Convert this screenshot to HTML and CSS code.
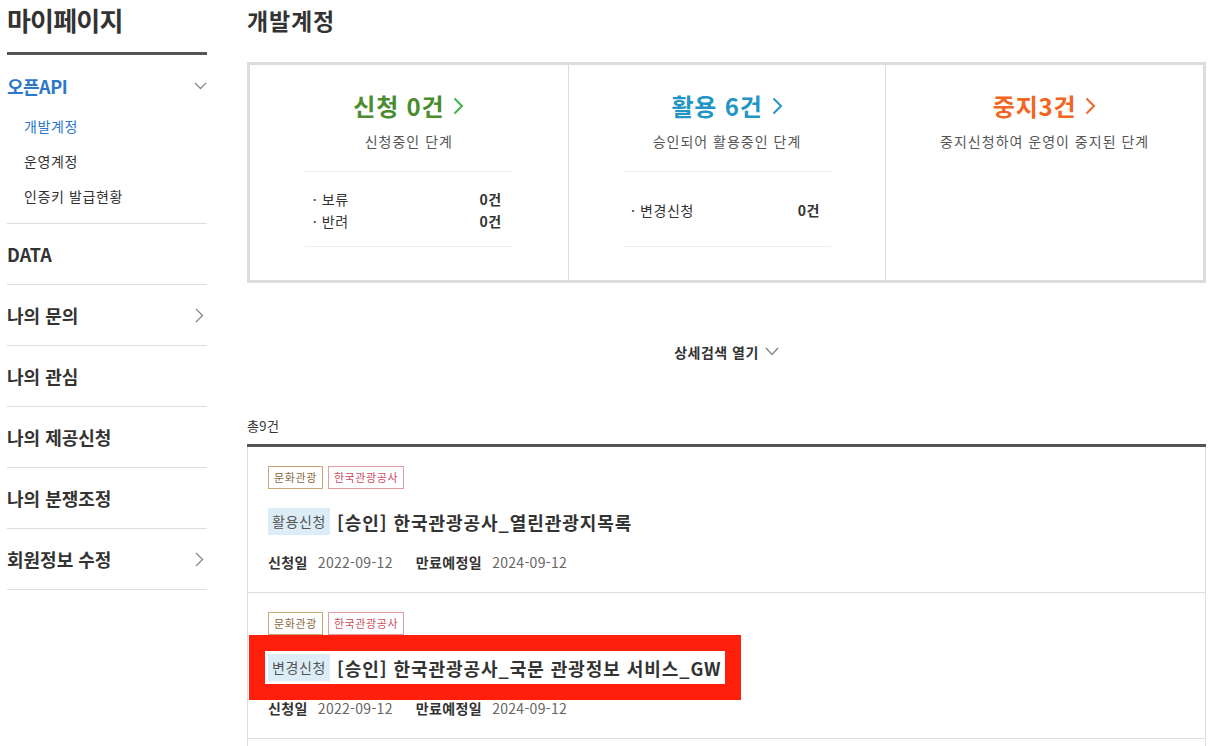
FILE: index.html
```html
<!DOCTYPE html>
<html lang="ko">
<head>
<meta charset="utf-8">
<title>마이페이지 - 개발계정</title>
<link rel="stylesheet" href="styles.css">
</head>
<body>
<div class="page">
  <aside class="side">
    <h1 class="side-title">마이페이지</h1>
    <div class="menu-group">
      <div class="menu-head active">
        <span>오픈API</span>
        <svg class="chev-down" width="13" height="8" viewBox="0 0 13 8"><polyline points="1,1 6.5,6.5 12,1" fill="none" stroke="#8a8a8a" stroke-width="1.4"/></svg>
      </div>
      <ul class="sub">
        <li class="on">개발계정</li>
        <li>운영계정</li>
        <li>인증키 발급현황</li>
      </ul>
    </div>
    <div class="menu-row"><span>DATA</span></div>
    <div class="menu-row"><span>나의 문의</span><svg class="chev-right" width="9" height="15" viewBox="0 0 9 15"><polyline points="1,1 7.5,7.5 1,14" fill="none" stroke="#8a8a8a" stroke-width="1.4"/></svg></div>
    <div class="menu-row"><span>나의 관심</span></div>
    <div class="menu-row"><span>나의 제공신청</span></div>
    <div class="menu-row"><span>나의 분쟁조정</span></div>
    <div class="menu-row"><span>회원정보 수정</span><svg class="chev-right" width="9" height="15" viewBox="0 0 9 15"><polyline points="1,1 7.5,7.5 1,14" fill="none" stroke="#8a8a8a" stroke-width="1.4"/></svg></div>
  </aside>

  <main class="main">
    <h2 class="main-title">개발계정</h2>

    <section class="summary">
      <div class="sum-col">
        <div class="sum-title green">신청 0건<svg class="sum-chev" width="11" height="18" viewBox="0 0 11 18"><polyline points="1.5,1.5 9,9 1.5,16.5" fill="none" stroke="#3db549" stroke-width="2"/></svg></div>
        <p class="sum-desc">신청중인 단계</p>
        <ul class="sum-list">
          <li><span>· 보류</span><b>0건</b></li>
          <li><span>· 반려</span><b>0건</b></li>
        </ul>
      </div>
      <div class="sum-col">
        <div class="sum-title blue">활용 6건<svg class="sum-chev" width="11" height="18" viewBox="0 0 11 18"><polyline points="1.5,1.5 9,9 1.5,16.5" fill="none" stroke="#2196c4" stroke-width="2"/></svg></div>
        <p class="sum-desc">승인되어 활용중인 단계</p>
        <ul class="sum-list">
          <li><span>· 변경신청</span><b>0건</b></li>
        </ul>
      </div>
      <div class="sum-col">
        <div class="sum-title orange">중지3건<svg class="sum-chev" width="11" height="18" viewBox="0 0 11 18"><polyline points="1.5,1.5 9,9 1.5,16.5" fill="none" stroke="#f26522" stroke-width="2"/></svg></div>
        <p class="sum-desc">중지신청하여 운영이 중지된 단계</p>
      </div>
    </section>

    <div class="search-toggle">
      <span>상세검색 열기</span>
      <svg width="14" height="9" viewBox="0 0 14 9"><polyline points="1,1 7,7.5 13,1" fill="none" stroke="#888" stroke-width="1.3"/></svg>
    </div>

    <p class="total">총9건</p>

    <ul class="list">
      <li class="item">
        <div class="tags"><span class="tag tag-cat">문화관광</span><span class="tag tag-org">한국관광공사</span></div>
        <div class="item-title"><span class="badge">활용신청</span><strong>[승인] 한국관광공사_열린관광지목록</strong></div>
        <div class="dates"><b>신청일</b><span>2022-09-12</span><b class="gap">만료예정일</b><span>2024-09-12</span></div>
      </li>
      <li class="item">
        <div class="tags"><span class="tag tag-cat">문화관광</span><span class="tag tag-org">한국관광공사</span></div>
        <div class="item-title highlight"><span class="badge">변경신청</span><strong>[승인] 한국관광공사_국문 관광정보 서비스_GW</strong></div>
        <div class="dates"><b>신청일</b><span>2022-09-12</span><b class="gap">만료예정일</b><span>2024-09-12</span></div>
      </li>
      <li class="item item-empty"></li>
    </ul>
  </main>
</div>
</body>
</html>
```

FILE: styles.css
```css
* { box-sizing: border-box; }
html, body { margin: 0; padding: 0; background: #fff; }
body {
  font-family: "Noto Sans CJK KR", "Noto Sans", sans-serif;
  color: #333;
  overflow: hidden;
  height: 746px;
}
ul { list-style: none; margin: 0; padding: 0; }
p { margin: 0; }

.page {
  display: flex;
  gap: 40px;
  padding-left: 7px;
  width: 1206px;
}

/* ---------- sidebar ---------- */
.side { width: 200px; flex: none; }
.side-title {
  margin: 0;
  padding-top: 2px;
  height: 55px;
  font-size: 26px;
  line-height: 36px;
  font-weight: 700;
  color: #333;
  letter-spacing: -0.8px;
  border-bottom: 3px solid #555;
}
.menu-group { border-bottom: 1px solid #ddd; }
.menu-head {
  display: flex;
  justify-content: space-between;
  align-items: center;
  margin-top: 19px;
  height: 24px;
  font-size: 18px;
  font-weight: 700;
  letter-spacing: -0.5px;
}
.menu-head.active { color: #2b78c9; }
.sub { padding: 11px 0 9px 17px; }
.sub li {
  height: 35px;
  line-height: 35px;
  font-size: 14px;
  color: #333;
  letter-spacing: 0.6px;
}
.sub li.on { color: #2b78c9; }
.menu-row {
  display: flex;
  justify-content: space-between;
  align-items: center;
  height: 61px;
  border-bottom: 1px solid #ddd;
  font-size: 18px;
  font-weight: 700;
  letter-spacing: 0;
  color: #333;
}
.chev-right { margin-right: 3px; }

/* ---------- main ---------- */
.main { width: 959px; flex: none; }
.main-title {
  margin: 0;
  padding-top: 3px;
  height: 62px;
  font-size: 23px;
  line-height: 34px;
  font-weight: 700;
  color: #333;
  letter-spacing: 0.8px;
}

.summary {
  display: grid;
  grid-template-columns: 1fr 1fr 1fr;
  height: 221px;
  border: 3px solid #ddd;
}
.sum-col {
  display: flex;
  flex-direction: column;
  align-items: center;
  padding-top: 24px;
  border-left: 1px solid #ddd;
}
.sum-col:first-child { border-left: 0; }
.sum-title {
  display: flex;
  align-items: center;
  gap: 9px;
  height: 32px;
  font-size: 24px;
  font-weight: 700;
  letter-spacing: 0.8px;
}
.sum-chev { margin-top: 1px; }
.green { color: #4b8c2f; }
.blue { color: #2196c4; }
.orange { color: #f26522; }
.sum-desc {
  margin-top: 10px;
  height: 20px;
  line-height: 20px;
  font-size: 14px;
  color: #555;
  letter-spacing: 1px;
}
.sum-list {
  margin-top: 20px;
  width: 208px;
  height: 76px;
  border-top: 1px solid #eee;
  border-bottom: 1px solid #eee;
  display: flex;
  flex-direction: column;
  justify-content: center;
  padding: 1px 11px 0 8px;
}
.sum-list li {
  display: flex;
  justify-content: space-between;
  height: 22px;
  line-height: 22px;
  font-size: 14px;
  color: #333;
  letter-spacing: 0.6px;
}
.sum-list b { font-weight: 700; color: #333; }

.search-toggle {
  display: flex;
  justify-content: center;
  align-items: center;
  gap: 6px;
  margin-top: 58px;
  height: 22px;
  font-size: 14px;
  font-weight: 700;
  color: #333;
  letter-spacing: 0.5px;
}
.search-toggle svg { margin-top: -2px; }

.total {
  margin-top: 53px;
  height: 20px;
  line-height: 20px;
  font-size: 13px;
  color: #333;
  letter-spacing: 0.4px;
}

.list {
  margin-top: 8px;
  border-top: 3px solid #555;
}
.item {
  padding: 19px 20px 20px;
  border-left: 1px solid #ddd;
  border-right: 1px solid #ddd;
  border-bottom: 1px solid #ddd;
}
.item-empty { height: 146px; }
.tags { display: flex; gap: 5px; height: 23px; }
.tag {
  height: 23px;
  line-height: 21px;
  padding: 0 5px;
  font-size: 11px;
  border: 1px solid;
  letter-spacing: 0.6px;
}
.tag-cat { color: #8b6a3e; border-color: #c9a874; }
.tag-org { color: #c8505e; border-color: #e49ca4; }

.item-title {
  display: flex;
  align-items: center;
  gap: 7px;
  margin-top: 19px;
  height: 27px;
}
.item-title.highlight {
  display: inline-flex;
  margin: 16px -3px -3px -3px;
  padding: 3px;
  height: 33px;
  background: #fff;
  outline: 16px solid #ff1f0a;
}
.badge {
  height: 27px;
  line-height: 27px;
  padding: 0 4px;
  font-size: 14px;
  color: #555;
  background: #dcedf7;
  letter-spacing: 0.6px;
}
.item-title strong {
  font-size: 18px;
  font-weight: 700;
  color: #333;
  letter-spacing: 0.95px;
}
.dates {
  display: flex;
  align-items: center;
  gap: 10px;
  margin-top: 17px;
  height: 20px;
  font-size: 14px;
}
.dates b { font-weight: 700; color: #333; letter-spacing: 0.4px; }
.dates span { color: #666; letter-spacing: 0.3px; }
.dates .gap { margin-left: 13px; }
```
